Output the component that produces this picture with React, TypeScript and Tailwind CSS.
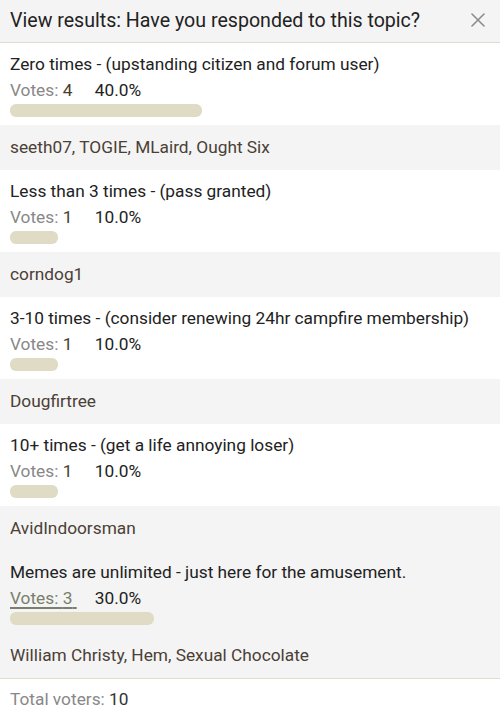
interface PollOption {
  label: string
  votes: number
  percent: string
  voters: string
}

const options: PollOption[] = [
  { label: 'Zero times - (upstanding citizen and forum user)', votes: 4, percent: '40.0%', voters: 'seeth07, TOGIE, MLaird, Ought Six' },
  { label: 'Less than 3 times - (pass granted)', votes: 1, percent: '10.0%', voters: 'corndog1' },
  { label: '3-10 times - (consider renewing 24hr campfire membership)', votes: 1, percent: '10.0%', voters: 'Dougfirtree' },
  { label: '10+ times - (get a life annoying loser)', votes: 1, percent: '10.0%', voters: 'AvidIndoorsman' },
  { label: 'Memes are unlimited - just here for the amusement.', votes: 3, percent: '30.0%', voters: 'William Christy, Hem, Sexual Chocolate' },
]

const total = 10

export default function App() {
  return (
    <div
      className="w-[500px] h-[714px] overflow-hidden bg-white text-[17.3px] leading-[25px]"
      style={{ fontFamily: 'Roboto, "Liberation Sans", sans-serif' }}
    >
      <div className="flex items-center justify-between bg-[#f4f4f4] border-b border-[#e2dbcf] pl-[10px] pr-[15px] py-[8px]">
        <span className="text-[#222] text-[19.6px] leading-[26px]">View results: Have you responded to this topic?</span>
        <svg width="14" height="14" viewBox="0 0 14 14" className="mt-[-2px]">
          <path d="M1 1L13 13M13 1L1 13" stroke="#8c8c8c" strokeWidth="1.6" strokeLinecap="round" />
        </svg>
      </div>

      {options.map((opt, i) => {
        const active = i === options.length - 1
        return (
          <div key={opt.label}>
            <div className={`px-[10px] pt-[9px] pb-[8px] ${active ? 'bg-[#f4f4f4]' : 'bg-white'}`}>
              <div className="text-[#222]">{opt.label}</div>
              <div className="flex leading-[27px]">
                {active ? (
                  <span className="text-[#7a7f6c] underline underline-offset-[3px] decoration-[1.5px]">
                    Votes: {opt.votes}&nbsp;
                  </span>
                ) : (
                  <span className="text-[#888]">
                    Votes: <span className="text-[#4a3d2f]">{opt.votes}</span>&nbsp;
                  </span>
                )}
                <span className="ml-[18px] text-[#222]">{opt.percent}</span>
              </div>
              <div className="h-[13px]">
                <div
                  className="h-full rounded-[6px] bg-[#dfdbc5]"
                  style={{ width: `${(opt.votes / total) * 100}%` }}
                />
              </div>
            </div>
            <div className="bg-[#f4f4f4] px-[10px] py-[10px] text-[#4b4036]">{opt.voters}</div>
          </div>
        )
      })}

      <div className="border-t border-[#e2dbcf] px-[10px] py-[8px]">
        <span className="text-[#888]">Total voters: </span>
        <span className="text-[#333]">{total}</span>
      </div>
    </div>
  )
}
